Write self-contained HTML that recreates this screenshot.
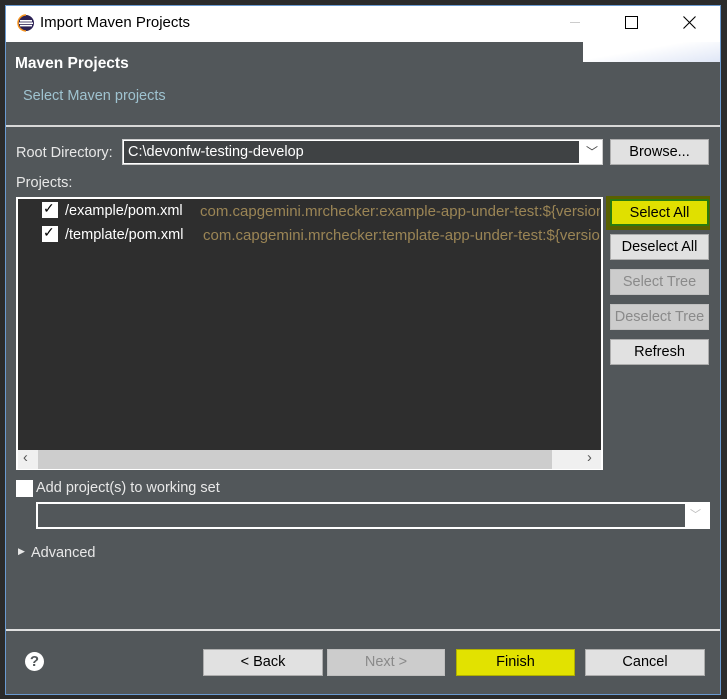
<html><head><style>
body{margin:0;width:727px;height:699px;background:#2b2b2b;position:relative;overflow:hidden;font-family:"Liberation Sans",sans-serif;font-size:14.5px;color:#e8e8e8}
.a{position:absolute}
.btn{position:absolute;background:#e1e1e1;border:1px solid #adadad;color:#000;text-align:center;box-sizing:border-box;line-height:24px;font-size:14.5px}
.dis{background:#cccccc;color:#8a8a8a;border-color:#bfbfbf}
.cb{position:absolute;width:16px;height:16px;background:#fff}
</style></head><body>
<div class="a" style="left:5px;top:5px;width:716px;height:690px;background:#52575a;border:1px solid #6a9ad0;box-sizing:border-box"></div>
<div class="a" style="left:6px;top:6px;width:714px;height:36px;background:#fff"></div>
<svg class="a" style="left:17px;top:14px" width="18" height="18"><circle cx="9" cy="9" r="8" fill="#2c2255"/><rect x="3" y="6" width="12" height="1.6" fill="#fff"/><rect x="2" y="8.4" width="14" height="1.6" fill="#fff"/><rect x="3" y="10.8" width="12" height="1.6" fill="#fff"/><path d="M9 1a8 8 0 0 0 0 16" fill="none" stroke="#f7941e" stroke-width="1.5"/></svg>
<div class="a" style="left:40px;top:14px;color:#000;font-size:15px">Import Maven Projects</div>
<div class="a" style="left:570px;top:22px;width:10px;height:1px;background:#ccc"></div>
<div class="a" style="left:625px;top:16px;width:11px;height:11px;border:1px solid #000"></div>
<svg class="a" style="left:683px;top:16px" width="13" height="13"><path d="M0.5 0.5L12.5 12.5M12.5 0.5L0.5 12.5" stroke="#000" stroke-width="1.1"/></svg>
<div class="a" style="left:583px;top:42px;width:137px;height:20px;background:linear-gradient(170deg,#fff 40%,#dfe6f6)"></div>
<div class="a" style="left:15px;top:55px;font-weight:bold;font-size:15.5px;color:#fff">Maven Projects</div>
<div class="a" style="left:23px;top:88px;color:#9fc3d0">Select Maven projects</div>
<div class="a" style="left:6px;top:125px;width:714px;height:2px;background:#d8d8d8"></div>
<div class="a" style="left:16px;top:145px">Root Directory:</div>
<div class="a" style="left:122px;top:139px;width:481px;height:26px;background:#fff;box-sizing:border-box;border:1px solid #ccc"></div>
<div class="a" style="left:124px;top:141px;width:455px;height:22px;background:#3f4244"></div>
<div class="a" style="left:128px;top:144px;color:#fff">C:\devonfw-testing-develop</div>
<div class="a" style="left:586px;top:143px;color:#444;font-size:12px">﹀</div>
<div class="btn" style="left:610px;top:139px;width:99px;height:26px">Browse...</div>
<div class="a" style="left:16px;top:175px">Projects:</div>
<div class="a" style="left:16px;top:197px;width:587px;height:273px;background:#fff"></div>
<div class="a" style="left:18px;top:199px;width:583px;height:251px;background:#2e2e2e"></div>
<div class="cb" style="left:42px;top:202px"></div><div class="a" style="left:43px;top:200px;color:#000;font-size:14px">✓</div>
<div class="a" style="left:65px;top:203px;color:#fff">/example/pom.xml</div>
<div class="a" style="left:200px;top:203px;color:#9b8555;white-space:nowrap;width:400px;overflow:hidden;font-size:15px">com.capgemini.mrchecker:example-app-under-test:${version</div>
<div class="cb" style="left:42px;top:226px"></div><div class="a" style="left:43px;top:224px;color:#000;font-size:14px">✓</div>
<div class="a" style="left:65px;top:227px;color:#fff">/template/pom.xml</div>
<div class="a" style="left:203px;top:227px;color:#9b8555;white-space:nowrap;width:397px;overflow:hidden;font-size:15px">com.capgemini.mrchecker:template-app-under-test:${version</div>
<div class="a" style="left:18px;top:450px;width:583px;height:19px;background:#f0f0f0"></div>
<div class="a" style="left:38px;top:450px;width:514px;height:19px;background:#cdcdcd"></div>
<div class="a" style="left:23px;top:450px;color:#555">‹</div><div class="a" style="left:587px;top:450px;color:#555">›</div>
<div class="a" style="left:606px;top:196px;width:104px;height:34px;background:#5a6000"></div>
<div class="btn" style="left:610px;top:199px;width:99px;height:27px;background:#e0e000;border:2px solid #2a7a10">Select All</div>
<div class="btn" style="left:610px;top:234px;width:99px;height:26px">Deselect All</div>
<div class="btn dis" style="left:610px;top:269px;width:99px;height:26px">Select Tree</div>
<div class="btn dis" style="left:610px;top:304px;width:99px;height:26px">Deselect Tree</div>
<div class="btn" style="left:610px;top:339px;width:99px;height:26px">Refresh</div>
<div class="a" style="left:16px;top:480px;width:17px;height:17px;background:#fff"></div>
<div class="a" style="left:36px;top:480px">Add project(s) to working set</div>
<div class="a" style="left:36px;top:502px;width:674px;height:27px;background:#fff"></div>
<div class="a" style="left:38px;top:504px;width:647px;height:23px;background:#52575a"></div>
<div class="a" style="left:690px;top:506px;color:#bbb;font-size:11px">﹀</div>
<div class="a" style="left:18px;top:546px;font-size:9px">▶</div>
<div class="a" style="left:31px;top:545px">Advanced</div>
<div class="a" style="left:6px;top:629px;width:714px;height:2px;background:#e0e0e0"></div>
<div class="a" style="left:25px;top:652px;width:19px;height:19px;border-radius:50%;background:#fff;color:#52575a;text-align:center;font-weight:bold;line-height:19px;font-size:15px">?</div>
<div class="btn" style="left:203px;top:649px;width:120px;height:27px">&lt; Back</div>
<div class="btn dis" style="left:327px;top:649px;width:118px;height:27px">Next &gt;</div>
<div class="btn" style="left:456px;top:649px;width:119px;height:27px;background:#e2e200;border-color:#b0b000">Finish</div>
<div class="btn" style="left:585px;top:649px;width:120px;height:27px">Cancel</div>
</body></html>
